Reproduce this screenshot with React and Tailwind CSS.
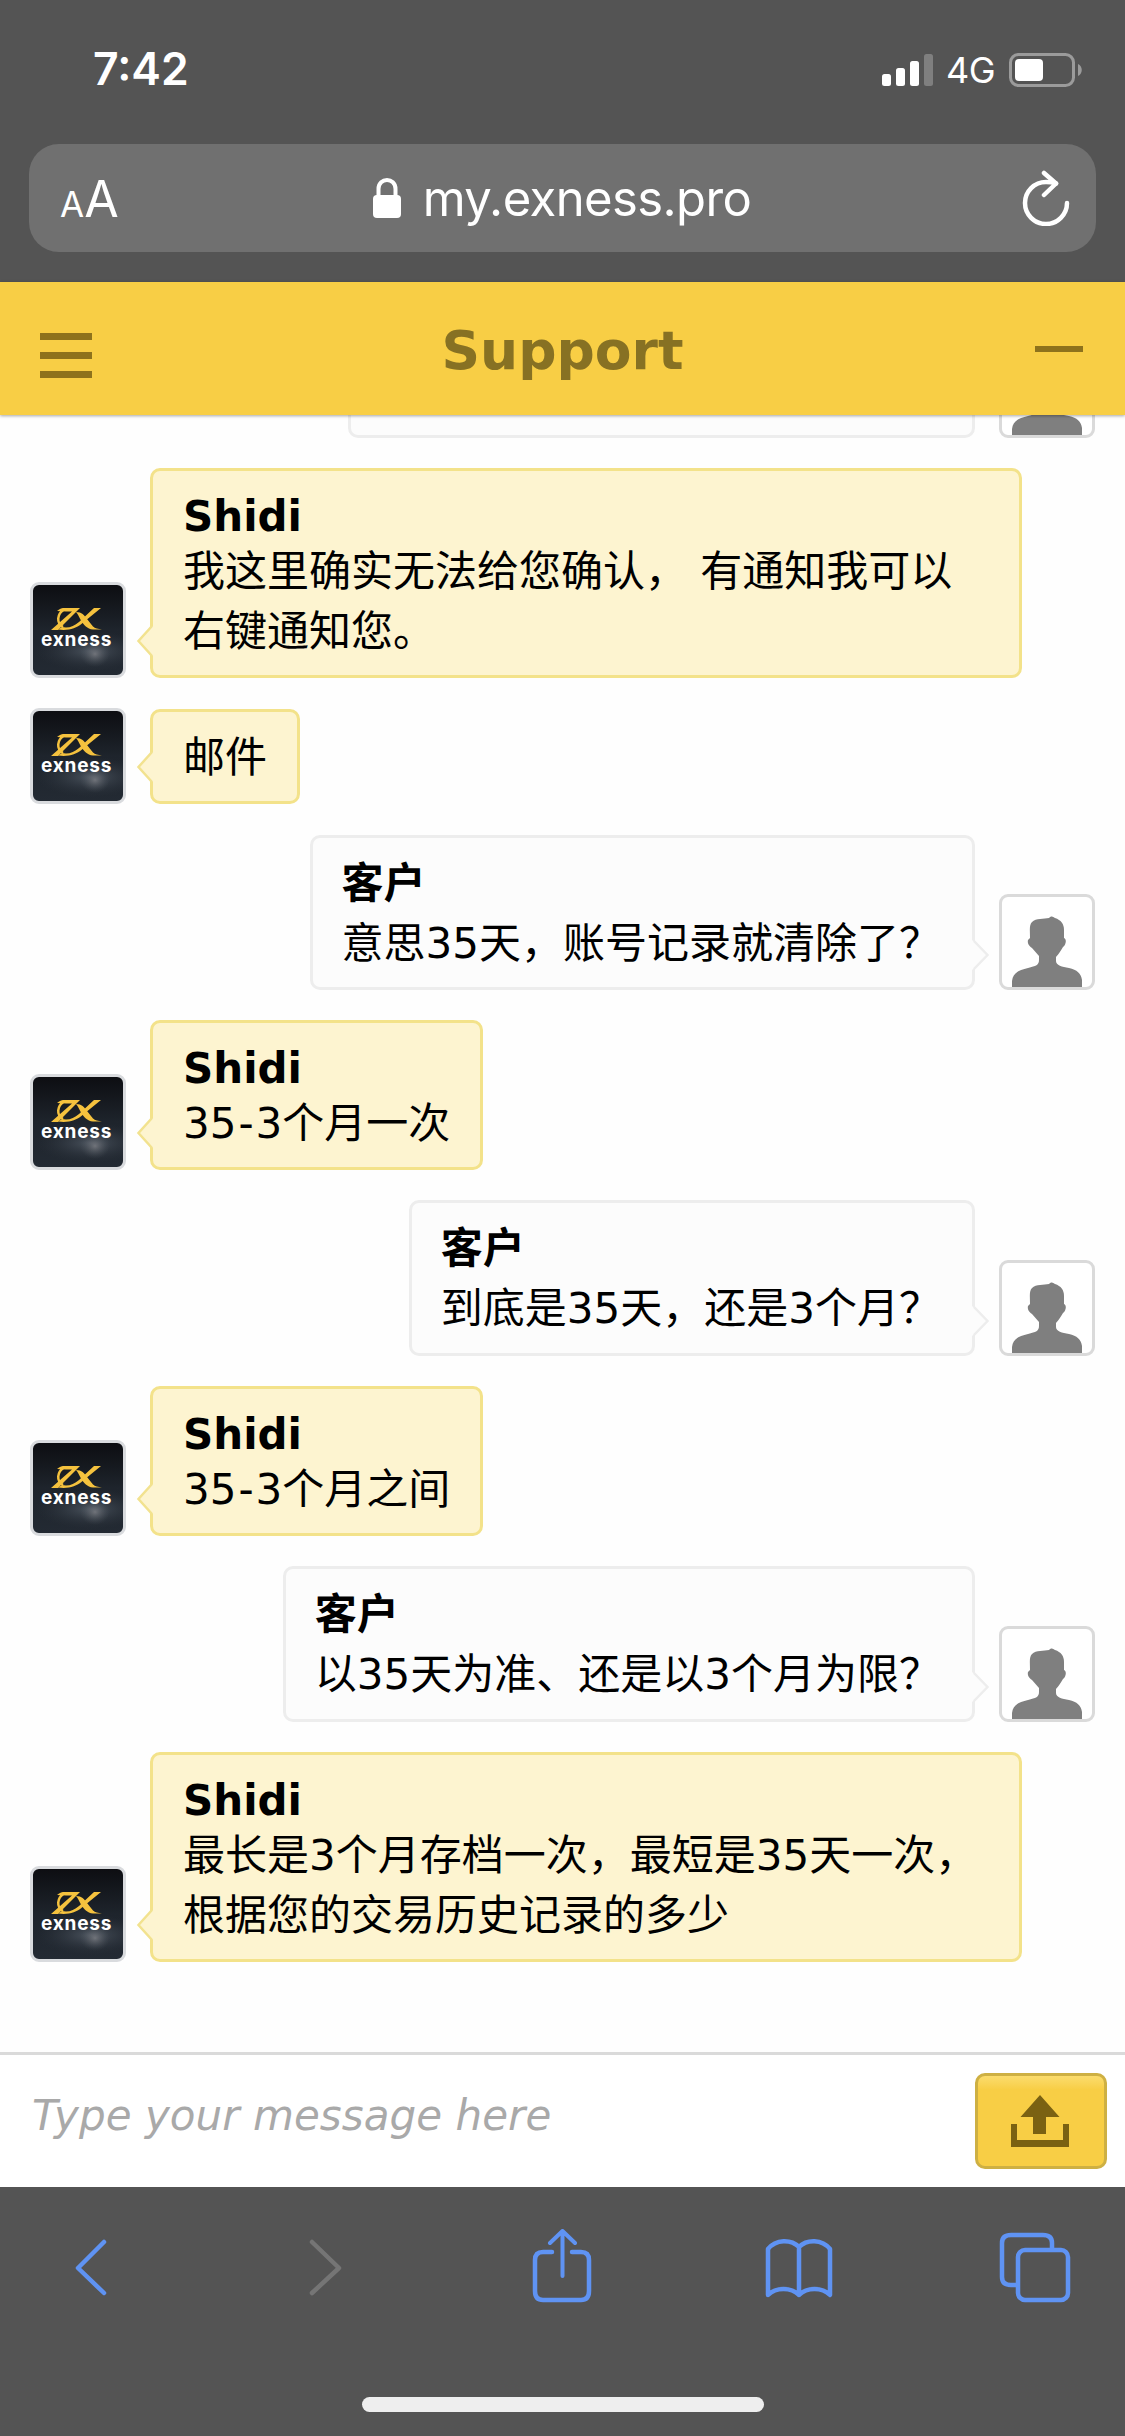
const MESSAGES = [
  { from: "agent", name: "Shidi", lines: ["我这里确实无法给您确认， 有通知我可以", "右键通知您。"], wide: true },
  { from: "agent", lines: ["邮件"] },
  { from: "client", name: "客户", lines: ["意思35天，账号记录就清除了？"] },
  { from: "agent", name: "Shidi", lines: ["35-3个月一次"] },
  { from: "client", name: "客户", lines: ["到底是35天，还是3个月？"] },
  { from: "agent", name: "Shidi", lines: ["35-3个月之间"] },
  { from: "client", name: "客户", lines: ["以35天为准、还是以3个月为限？"] },
  { from: "agent", name: "Shidi", lines: ["最长是3个月存档一次，最短是35天一次，", "根据您的交易历史记录的多少"], wide: true },
];

const AgentAvatar = () => (
  <div className="relative size-24 shrink-0 rounded-[9px] border-[3px] border-[#d9dbde] bg-linear-to-b from-[#0d0e12] via-[#1e242c] to-[#232a33]">
    <svg viewBox="0 0 90 90" className="size-full rounded-[6px]">
      <defs>
        <radialGradient id="glow">
          <stop offset="0" stopColor="#85868b" stopOpacity="0.7" />
          <stop offset="1" stopColor="#4b525b" stopOpacity="0" />
        </radialGradient>
        <radialGradient id="haze">
          <stop offset="0" stopColor="#535c67" stopOpacity="0.85" />
          <stop offset="1" stopColor="#2b323b" stopOpacity="0" />
        </radialGradient>
      </defs>
      <ellipse cx="58" cy="66" rx="56" ry="20" fill="url(#haze)" />
      <ellipse cx="62" cy="69" rx="15" ry="13" fill="url(#glow)" />
      <g fill="#f5c23e">
        <path d="M24 26C27 23.500 29 23 32 23H47L25 45H18L39 26.500H33C30 26.500 27 26 24 26Z" />
        <path d="M68 23H61L46 37C41 41.500 35 43.500 29 42L25 44.500C35 46 43 43.500 49 38.500Z" />
        <path d="M43 27C49 27 51 30 54 34L60 41.500C62 43.500 65 44 69 44.500H60C54 44 51 40 48 35.500C46 32 45 29 43 27Z" />
      </g>
      <path d="M31 24.500C24 29 23 38 30 42" fill="none" stroke="#f5c23e" strokeWidth="2.500" />
    </svg>
    <span className="absolute left-[8px] top-[44px] font-['Inter',sans-serif] text-[19px] font-bold leading-[22px] tracking-[0.800px] text-white">
      exness
    </span>
  </div>
);

const ClientAvatar = () => (
  <div className="size-24 shrink-0 rounded-[9px] border-[3px] border-[#dadada] bg-white">
    <svg viewBox="3 3 90 90" className="size-full" fill="#7f7f7f">
      <path d="M13 93V87C14 79 20 76 29 74C37 72 40 71 40 66V62L33 54C31 53 28 50 29 46L31 44C31 37 30 31 33 28C37 24 45 25 50 24C53 21 54 23 56 24C62 26 65 30 65 36V44C68 45 67 51 64 53C62 56 60 60 57 63V67C57 71 63 73 70 74C78 76 82 79 83 86V93Z" />
    </svg>
  </div>
);

const AgentTail = () => (
  <svg viewBox="0 0 18 36" className="absolute -left-[17px] bottom-[16px] h-9 w-[18px]">
    <path d="M18 2L2.500 18L18 34Z" fill="#fdf4d0" />
    <path d="M16 3L2.500 18L16 33" fill="none" stroke="#f2e28f" strokeWidth="2.500" />
  </svg>
);

const ClientTail = () => (
  <svg viewBox="0 0 18 32" className="absolute -right-[18px] bottom-[16px] h-8 w-[18px]">
    <path d="M0 1L15.500 16L0 31Z" fill="#fcfcfc" />
    <path d="M2 2L15.500 16L2 30" fill="none" stroke="#ededed" strokeWidth="2.500" />
  </svg>
);

const Message = ({ from, name, lines, wide }) => {
  const agent = from === "agent";
  return (
    <div className={agent ? "flex items-end gap-6" : "flex flex-row-reverse items-end gap-6"}>
      {agent ? <AgentAvatar /> : <ClientAvatar />}
      <div
        className={`relative rounded-[10px] border-[3px] pt-4 pb-[13.500px] ${
          agent ? "border-[#f3e28a] bg-[#fdf4d0] px-[30px]" : "border-[#ededed] bg-[#fcfcfc] pl-[29px] pr-[31px]"
        } ${wide ? "w-[872px]" : ""}`}
      >
        {name && (
          <div className={agent ? "h-[54.500px] font-bold leading-[60px]" : "h-[60px] font-bold leading-[60px]"}>
            {name}
          </div>
        )}
        {lines.map((line) => (
          <div key={line} className="h-[60px] whitespace-nowrap leading-[60px]">
            {/* the hyphen in a range gets a little more room */}
            {line.split("-").map((part, i) => (
              <span key={i}>
                {i > 0 && <span className="px-[2px]">-</span>}
                {part}
              </span>
            ))}
          </div>
        ))}
        {agent ? <AgentTail /> : <ClientTail />}
      </div>
    </div>
  );
};

const StatusBar = () => (
  <div className="flex h-36 items-start justify-between pl-[93px] pr-[42px] pt-[42px] text-white">
    <span className="text-[44.500px] font-semibold leading-[54px]">7:42</span>
    <div className="flex items-center pt-px">
      <svg viewBox="0 0 51 32" className="h-8 w-[51px]" fill="#fff">
        <rect x="0" y="20" width="9" height="12" rx="2.500" />
        <rect x="14" y="14" width="9" height="18" rx="2.500" />
        <rect x="28" y="7" width="9" height="25" rx="2.500" />
        <rect x="42" y="0" width="9" height="32" rx="2.500" fill="#7f7f7f" />
      </svg>
      <span className="ml-[13px] w-[51px] text-[36px] leading-[54px] tracking-[-0.500px]">4G</span>
      <svg viewBox="0 0 74 34" className="ml-3 h-[34px] w-[74px]">
        <rect x="1.500" y="1.500" width="63" height="31" rx="8" fill="none" stroke="#9b9b9b" strokeWidth="3" />
        <rect x="6" y="6" width="28" height="22" rx="4" fill="#fff" />
        <path d="M69 11C74 13 74 21 69 23Z" fill="#9b9b9b" />
      </svg>
    </div>
  </div>
);

const AddressBar = () => (
  <div className="mx-[29px] flex h-[108px] items-center justify-between rounded-[30px] bg-[#707070] pl-[31px] pr-[26px] text-white">
    <div className="flex w-[60px] items-baseline pt-[2px]">
      <span className="text-[35px]">A</span>
      <span className="text-[50px]">A</span>
    </div>
    <div className="flex items-center pr-[18px]">
      <svg viewBox="0 0 28 40" className="mr-[22px] h-10 w-7">
        <rect x="0" y="17" width="28" height="23" rx="4" fill="#fff" />
        <path d="M5.500 18V11C5.500 -1 22.500 -1 22.500 11V18" fill="none" stroke="#fff" strokeWidth="4" />
      </svg>
      <span className="pt-px text-[49px] leading-[60px] tracking-[-0.600px]">my.exness.pro</span>
    </div>
    <svg viewBox="0 0 48 56" className="h-14 w-12" fill="none" stroke="#fff" strokeWidth="4.500" strokeLinecap="round" strokeLinejoin="round">
      <path d="M45 33A21 21 0 1 1 24 12C28 12 31 12.500 34 13.500" />
      <path d="M22 3L34 13.500L22 25" />
    </svg>
  </div>
);

const ChatHeader = () => (
  <div className="relative z-10 flex h-[133px] shrink-0 items-center justify-between bg-[#f8ce45] pl-10 pr-[42px] shadow-[0_1px_3px_rgba(0,0,0,0.35)]">
    <div className="mt-[13px] flex flex-col gap-3">
      <span className="h-[7px] w-[52px] bg-[#8e721c]" />
      <span className="h-[7px] w-[52px] bg-[#8e721c]" />
      <span className="h-[7px] w-[52px] bg-[#8e721c]" />
    </div>
    <h1 className="pr-[2px] pt-[4px] text-[53.500px] font-bold leading-[60px] text-[#877123]">Support</h1>
    <span className="h-[6px] w-12 bg-[#8e721c]" />
  </div>
);

const Composer = () => (
  <div className="flex h-[135px] shrink-0 items-start justify-between border-t-[3px] border-[#dadada] bg-white pl-8 pr-[18px] pt-[18px]">
    <span className="pt-[15px] text-[42px] italic leading-[56px] tracking-[0.050px] text-[#a9a9a9]">Type your message here</span>
    <button className="flex h-24 w-[132px] items-center justify-center rounded-[10px] border-[3px] border-[#ceb043] bg-[#f8ce45] bg-linear-to-b from-[#fbdc6c] to-[#f8ce45] to-15% pr-[2px]">
      <svg viewBox="0 0 58 52" className="h-[52px] w-[58px]" fill="#7a6112">
        <path d="M29 0L48.500 22H35V39H22V22H9.500Z" />
        <path d="M0 29H6V45H52V29H58V52H0Z" />
      </svg>
    </button>
  </div>
);

const BrowserToolbar = () => (
  <div className="flex h-[249px] shrink-0 flex-col items-center justify-between bg-[#545454] pb-6 pt-[42px]">
    <svg viewBox="0 2229 1125 76" className="h-[76px] w-full" fill="none" stroke="#5f93f3" strokeWidth="4.500" strokeLinecap="round" strokeLinejoin="round">
      <path d="M104 2242L78 2268L104 2293" />
      <path d="M312 2242L339 2268L312 2293" stroke="#757575" />
      <path d="M552 2252H543Q535 2252 535 2260V2291Q535 2300 543 2300H581Q589 2300 589 2291V2260Q589 2252 581 2252H572" />
      <path d="M562.500 2276V2232M550 2243L562.500 2231L575 2243" strokeWidth="4" />
      <path d="M799 2247C791 2239 776 2239 768 2249V2295C776 2287 791 2287 799 2295C807 2287 822 2287 830 2295V2249C822 2239 807 2239 799 2247V2295" strokeWidth="4.500" />
      <path d="M1016 2285H1011Q1002 2285 1002 2277V2243Q1002 2235 1011 2235H1043Q1052 2235 1052 2243V2248" />
      <rect x="1018" y="2250" width="50" height="50" rx="7" />
    </svg>
    <div className="h-[15px] w-[402px] rounded-full bg-[#eeeeee]" />
  </div>
);

export default function App() {
  return (
    <div className="flex h-[2436px] w-[1125px] flex-col overflow-hidden bg-[#545454]">
      <div className="h-[282px] shrink-0 font-['Inter',sans-serif]">
        <StatusBar />
        <AddressBar />
      </div>
      <div className="flex h-[1905px] flex-col bg-[#fefefe] font-['DejaVu_Sans','Noto_Sans_CJK_SC',sans-serif] text-black">
        <ChatHeader />
        <div className="flex flex-1 flex-col justify-end gap-[30.200px] overflow-hidden pb-[90px] pl-[30px] pr-[30px] text-[42px]">
          {/* tail end of an earlier message, scrolled under the header */}
          <div className="flex shrink-0 flex-row-reverse items-end gap-6">
            <ClientAvatar />
            <div className="h-[100px] w-[627px] rounded-[10px] border-[3px] border-[#ededed] bg-[#fcfcfc]" />
          </div>
          {MESSAGES.map((message, index) => (
            <Message key={index} {...message} />
          ))}
        </div>
        <Composer />
      </div>
      <BrowserToolbar />
    </div>
  );
}
